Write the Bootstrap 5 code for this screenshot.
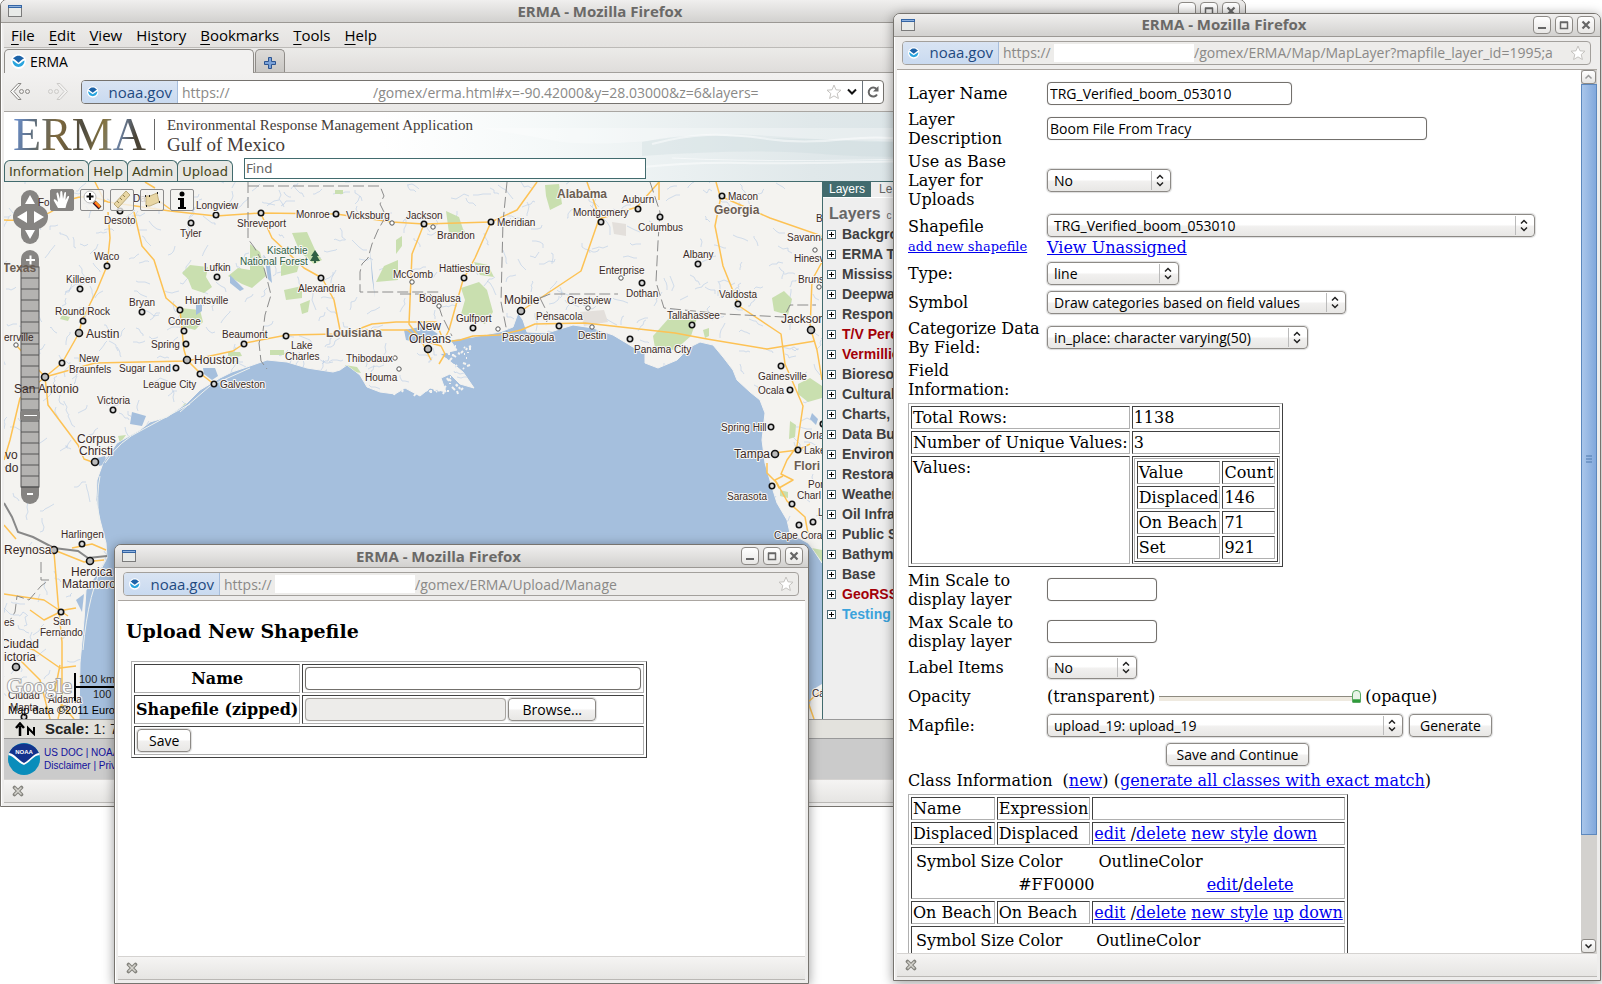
<!DOCTYPE html>
<html lang="en">
<head>
<meta charset="utf-8">
<meta name="viewport" content="width=device-width, initial-scale=1">
<title>ERMA - Mozilla Firefox</title>
<link href="https://cdn.jsdelivr.net/npm/bootstrap@5.3.0/dist/css/bootstrap.min.css" rel="stylesheet">
<style>
  :root { --ui: "Open Sans", "Noto Sans", sans-serif; --serif: "DejaVu Serif", serif; --sans: "Liberation Sans", Arial, sans-serif; --teal: #426b6e; }
  html, body { height: 100%; }
  body { background: #fff; color: #000; font-family: var(--ui); font-size: 14px; line-height: 19px; overflow: hidden; }
  .desktop { min-height: 100vh; overflow: hidden; }

  /* windows on the desktop */
  .win { position: absolute; background: #eeedec; border: 1px solid #77746f; border-radius: 7px 7px 0 0; box-shadow: inset 1px 1px 0 #fff, 0 2px 12px rgba(0,0,0,.4); overflow: hidden; }
  .win-map { left: 0; right: 356px; top: -1px; bottom: 177px; box-shadow: inset 1px 1px 0 #fff; }
  .win-upload { left: 114px; right: 793px; top: 544px; bottom: 0; }
  .win-layer { left: 893px; right: 1px; top: 13px; bottom: 3px; }
  .titlebar { height: 23px; background: linear-gradient(#f0efee, #d2d1cf); border-bottom: 1px solid #9b9894; padding: 0 5px 0 7px; }
  .titlebar .ttl { font-weight: 700; font-size: 15px; color: #6a6967; }
  .wbtn { width: 18px; height: 18px; padding: 0; border: 1px solid #8d8a86; border-radius: 4px; background: linear-gradient(#fff, #e8e7e5); display: flex; align-items: center; justify-content: center; }
  .inner { margin: 0 3px; min-height: 0; }

  .menubar { height: 25px; border-bottom: 1px solid #bcbab7; padding: 0 7px; gap: 14px; background: linear-gradient(#edecea, #e4e2e0); }
  .menubar a { color: #000; text-decoration: none; font-size: 15px; }
  .menubar u { text-underline-offset: 3px; }
  .tabbar { height: 25px; border-bottom: 1px solid #a3a09c; background: linear-gradient(#ecebe9, #dfdddb); }
  .tab-cur { width: 250px; height: 24px; margin-bottom: -1px; border: 1px solid #8f8c88; border-bottom: 0; border-radius: 5px 5px 0 0; background: #f2f1f0; padding: 0 6px; }
  .tab-new { width: 30px; height: 23px; border: 1px solid #8f8c88; border-bottom: 0; border-radius: 5px 5px 0 0; background: linear-gradient(#dddbd8, #c9c7c4); padding: 0; margin-left: 1px; }
  .navtool { height: 39px; background: linear-gradient(#f2f1f0, #e9e8e6); border-bottom: 1px solid #a9a6a2; padding-left: 5px; }
  .navtool .url { width: 803px; background: #fff; border-color: #75726e; }
  .url { height: 24px; border: 1px solid #a3a09c; border-radius: 4px; background: #edecea; overflow: hidden; font-size: 15px; white-space: nowrap; }
  .ident { width: 96px; height: 100%; background: linear-gradient(#d9e4f3, #c9daf0); border-right: 1px solid #a7bedd; color: #1f4a80; padding: 0 5px; gap: 10px; flex: none; }
  .url .addr { color: #8a8987; min-width: 0; overflow: hidden; padding-left: 4px; font-size: 14px; }
  .url .addr > :first-child { min-width: 51px; }
  .blank { width: 140px; height: 18px; background: #fff; flex: none; }
  .popnav { height: 33px; padding: 4px 6px 0 5px; border-bottom: 1px solid #aba6a1; flex: none; }
  .addonbar { height: 24px; border-top: 1px solid #d5d3d1; border-bottom: 1px solid #bab8b5; background: linear-gradient(#f5f4f3, #e6e5e3); padding: 0 8px; margin-bottom: 3px; flex: none; }
  .addonbar button, .plain { border: 0; background: none; padding: 0; line-height: 0; }

  /* site header */
  .banner { height: 70px; border-bottom: 1px solid var(--teal); background: #fff; position: relative; }
  .banner-art { position: absolute; inset: 0 0 0 auto; width: 860px; height: 69px; }
  .brandrow { height: 45px; padding-left: 9px; }
  .logo { font: 46px/46px "Liberation Serif", serif; background: linear-gradient(100deg, #6a8cc4 4%, #5d6a74 18%, #7d683c 34%, #4d4a40 52%, #85733f 66%, #6d84a6 78%, #4a4335 90%); -webkit-background-clip: text; background-clip: text; color: transparent; }
  .tagline { font-family: "Liberation Serif", serif; color: #453c38; border-left: 1px solid #666; padding-left: 12px; height: 31px; }
  .tagline div:first-child { font-size: 15px; line-height: 12px; }
  .tagline div:last-child { font-size: 19px; line-height: 28px; }
  .stab { height: 21px; border: 1px solid var(--teal); border-bottom: 0; border-radius: 6px 6px 0 0; background: #e8e8e4; color: #45461b; font: 13px/22px "DejaVu Sans", sans-serif; text-decoration: none; padding: 0 4px; margin-right: -1px; }
  .find { width: 402px; height: 21px; padding: 0 1px; border: 1px solid var(--teal); border-radius: 0; font: 13px/18px "DejaVu Sans", sans-serif; margin-left: 12px; margin-bottom: 2px; }
  .find::placeholder { color: #666; opacity: 1; }

  .mapbox { position: relative; background: #a5bfdd; min-width: 0; overflow: hidden; }
  .mapbox > svg { display: block; width: 100%; height: 100%; position: absolute; inset: 0; }
  .maptools { position: absolute; left: 46px; top: 7px; gap: 6px; }
  .maptools button { width: 24px; height: 22px; padding: 0; border: 1px solid #8b8b8b; border-radius: 2px; background: rgba(244,243,240,.8); line-height: 0; }
  .maptools button.on { background: #868482; border-color: #868482; }
  .side { width: 420px; flex: none; border-left: 1px solid var(--teal); background: #eee; font-family: var(--sans); overflow: hidden; }
  .side .tabs a { font-size: 12px; line-height: 15px; padding: 0 6px; text-decoration: none; color: #666; }
  .side .tabs a.on { background: var(--teal); color: #fff; }
  .side .tabs a:last-child { padding-left: 8px; }
  .side .tabs { border-bottom: 1px solid #fff; }
  .side h2 { font: bold 16px/16px var(--sans); color: #666; margin: 8px 0 0 6px; }
  .side h2 small { font-size: 10px; font-weight: 400; margin-left: 6px; }
  .tree { list-style: none; margin: 0; padding: 0 0 0 4px; }
  .tree li { height: 20px; font-weight: 700; font-size: 14px; line-height: 20px; color: #3f3f3f; gap: 6px; white-space: nowrap; }
  .tree button { width: 9px; height: 9px; padding: 0; border: 1px solid #4a6872; background: #fff; line-height: 0; flex: none; }
  .scalebar { height: 20px; border-top: 1px solid #999; border-bottom: 1px solid #999; background: #e3e2dd; font: 15px/18px var(--sans); padding-left: 11px; color: #222; }
  .foot { height: 40px; background: #cbcbcb; font: 10px/13px var(--sans); padding: 0 4px; color: #11119c; }
  .foot a { color: #11119c; text-decoration: none; }

  /* form documents */
  .doc { background: #fff; font: 16px/19px var(--serif); color: #000; overflow: hidden; min-width: 0; }
  .doc a { color: #00e; text-decoration: underline; }
  .doc .form-control, .doc .form-select, .doc .btn { font: 14px/19px var(--ui); height: 23px; color: #000; border-radius: 4px; margin: 1px 0; }
  .doc .form-control { border: 1px solid #73706c; padding: 0 2px; box-shadow: 0 0 1px #bbb; display: inline-block; }
  .doc .form-select { border: 1px solid #8d8a86; padding: 0 24px 0 5px; box-shadow: 0 0 1px 1px #ddd; width: auto; text-indent: 1px;
    background: url("data:image/svg+xml,%3Csvg xmlns='http://www.w3.org/2000/svg' width='20' height='19'%3E%3Cpath d='M1.5 0V19' stroke='%23bbb'/%3E%3Cpath d='M7 7.500l3-3 3 3M7 11.500l3 3 3-3' fill='none' stroke='%23222' stroke-width='1.500'/%3E%3C/svg%3E") no-repeat right 0 center / 20px 19px, linear-gradient(#fff 45%, #f1f0ef 55%, #e8e7e5); }
  .doc .btn { border: 1px solid #8d8a86; background: linear-gradient(#fff 45%, #f1f0ef 55%, #e8e7e5); padding: 0 10px; box-shadow: 0 0 1px 1px #ddd; white-space: nowrap; }
  .layerform { padding: 11px 14px 0 11px; }
  .layerform > * { flex-shrink: 0; }
  .frow { display: flex; align-items: center; gap: 2px; min-height: 25px; width: 100%; }
  .frow > .lab { width: 137px; flex: none; }
  .lab small { font-size: 13px; }
  .oldtable { border: 1px solid; border-color: #b0b0b0 #404040 #404040 #b0b0b0; border-collapse: separate; border-spacing: 2px; }
  .oldtable > tbody > tr > td, .oldtable > tbody > tr > th { border: 1px solid; border-color: #404040 #b0b0b0 #b0b0b0 #404040; padding: 1px; }
  .bare { border-collapse: separate; border-spacing: 2px; }
  .bare td { padding: 1px; height: 21px; }
  input[type=range].opac { -webkit-appearance: none; appearance: none; width: 202px; height: 16px; background: linear-gradient(#8d8a80, #8d8a80) 0 8px / 100% 1px no-repeat, linear-gradient(#efeae0, #efeae0) 0 9px / 100% 4px no-repeat; margin: 0 2px; }
  input[type=range].opac::-webkit-slider-thumb { -webkit-appearance: none; width: 9px; height: 13px; background: linear-gradient(#e8f4e8 70%, #2f9b3a 80%); border: 1px solid #5aa863; border-radius: 4px 4px 1px 1px; }
  .sbar { width: 16px; flex: none; background: #d3d1ce; }
  .sbar button { width: 15px; height: 14px; padding: 0; border: 1px solid #8d8a86; border-radius: 3px; background: linear-gradient(#fff, #e6e5e3); line-height: 0; }
  .sbar .thumb { flex: 0 0 85%; border: 1px solid #5d88bd; background: linear-gradient(90deg, #a9c6ea, #82a8dc); display: flex; align-items: center; justify-content: center; }
  h3.up { font: bold 19px/22px var(--serif); margin: 19px 0 19px; }
  .uptable { margin-left: 5px; }
  .uptable .form-control { margin: 1px; display: block; }
  .uptable .btn { margin: 1px; padding: 0 11px; }
  .uptable .btn.browse { padding: 0 13px; }
</style>
</head>
<body>
<svg width="0" height="0" class="position-absolute" aria-hidden="true">
  <symbol id="i-win" viewBox="0 0 14 12"><rect x=".5" y=".5" width="13" height="11" fill="#e8eae8" stroke="#7b7b7b"/><path d="M0 0h14v3H0z" fill="#3465a4"/><path d="M1 1h12v1H1z" fill="#8fb2de"/></symbol>
  <symbol id="i-min" viewBox="0 0 10 10"><path d="M1 8h8" stroke="#666" stroke-width="2"/></symbol>
  <symbol id="i-max" viewBox="0 0 10 10"><path d="M1.500 2.500h7v6h-7zM1 2h8" stroke="#666" stroke-width="1.500" fill="none"/></symbol>
  <symbol id="i-x" viewBox="0 0 10 10"><path d="M1.500 1.500l7 7M8.500 1.500l-7 7" stroke="#666" stroke-width="2.200"/></symbol>
  <symbol id="i-noaa" viewBox="0 0 16 16"><circle cx="8" cy="8" r="8" fill="#fff"/><path d="M3.800 3.500C5 1.200 11 1.200 12.200 3.500L14 4.600c-1.800.6-3.500 3-6 4.600C5.500 7.600 3.800 5.200 2 4.600z" fill="#1d63a8"/><path d="M1.600 7c1.600.2 3.400 2.800 6.400 4 3-1.200 4.800-3.800 6.400-4C14.400 16 1.600 16 1.600 7z" fill="#2aa5de"/></symbol>
  <symbol id="i-star" viewBox="0 0 16 16"><path d="M8 1l2 4.800 5 .4-3.800 3.300 1.200 5L8 11.900 3.600 14.500l1.200-5L1 6.200l5-.4z" fill="#fff" stroke="#c4c2bf" stroke-linejoin="round"/></symbol>
  <symbol id="i-xx" viewBox="0 0 12 12"><path d="M2.500 2.500l7 7M9.500 2.500l-7 7" stroke="#83827c" stroke-width="3.600" stroke-linecap="round"/><path d="M2.500 2.500l7 7M9.500 2.500l-7 7" stroke="#d5d4ce" stroke-width="1.500"/></symbol>
  <symbol id="i-plus" viewBox="0 0 7 7"><path d="M1 3.500h5M3.500 1v5" stroke="#000"/></symbol>
</svg>

<main class="desktop position-relative">

<!-- map window -->
<section class="win win-map d-flex flex-column">
  <div class="titlebar d-flex align-items-center gap-1">
    <svg width="14" height="12"><use href="#i-win"/></svg><div class="ttl flex-fill text-center">ERMA - Mozilla Firefox</div>
    <button class="wbtn" aria-label="Minimize"><svg width="10" height="10"><use href="#i-min"/></svg></button>
    <button class="wbtn" aria-label="Maximize"><svg width="10" height="10"><use href="#i-max"/></svg></button>
    <button class="wbtn" aria-label="Close"><svg width="10" height="10"><use href="#i-x"/></svg></button>
  </div>
  <div class="inner d-flex flex-column flex-fill">
    <nav class="menubar d-flex align-items-center">
      <a href="#"><u>F</u>ile</a><a href="#"><u>E</u>dit</a><a href="#"><u>V</u>iew</a><a href="#">Hi<u>s</u>tory</a><a href="#"><u>B</u>ookmarks</a><a href="#"><u>T</u>ools</a><a href="#"><u>H</u>elp</a>
    </nav>
    <div class="tabbar d-flex align-items-end">
      <div class="tab-cur d-flex align-items-center gap-1"><svg width="15" height="15"><use href="#i-noaa"/></svg>ERMA</div>
      <button class="tab-new" aria-label="New tab"><svg width="12" height="12" viewBox="0 0 12 12"><path d="M4.500 .5h3v4h4v3h-4v4h-3v-4h-4v-3h4z" fill="#7ba2d8" stroke="#2d5590"/></svg></button>
    </div>
    <div class="navtool d-flex align-items-center">
      <svg width="22" height="20" viewBox="0 0 22 20" fill="none" stroke="#8a8885"><path d="M9 1.500L1.500 9.500 9 17.500h3L5 9.500l7-8z" fill="#f7f7f6"/><circle cx="12.500" cy="9.500" r="2"/><circle cx="18.500" cy="9.500" r="2"/></svg>
      <svg class="ms-3 me-2 opacity-50" width="22" height="20" viewBox="0 0 22 20" fill="none" stroke="#aaa8a5"><path d="M13 1.500l7.500 8-7.500 8h-3l7-8-7-8z" fill="#f7f7f6"/><circle cx="3.500" cy="9.500" r="2"/><circle cx="9.500" cy="9.500" r="2"/></svg>
      <div class="url ms-1 d-flex align-items-center">
        <div class="ident d-flex align-items-center"><svg width="16" height="16"><use href="#i-noaa"/></svg>noaa.gov</div>
        <div class="addr flex-fill d-flex align-items-center"><span>https://</span><span class="blank"></span><span>/gomex/erma.html#x=-90.42000&amp;y=28.03000&amp;z=6&amp;layers=</span></div>
        <svg width="16" height="16"><use href="#i-star"/></svg>
        <svg class="mx-1" width="12" height="8" viewBox="0 0 12 8"><path d="M2 1.500l4 4 4-4" fill="none" stroke="#111" stroke-width="2"/></svg>
        <button class="plain border-start border-secondary h-100 px-1" aria-label="Reload"><svg width="12" height="12" viewBox="0 0 12 12"><path d="M9.500 3A4.500 4.500 0 1 0 10 8.500" fill="none" stroke="#666" stroke-width="2"/><path d="M11.500 0v5.500H6z" fill="#666"/></svg></button>
      </div>
    </div>
    <header class="banner d-flex flex-column justify-content-between">
      <svg class="banner-art" viewBox="0 0 860 69" preserveAspectRatio="none" aria-hidden="true">
        <defs><linearGradient id="sky"><stop offset="0" stop-color="#fff"/><stop offset=".2" stop-color="#f4f8f8"/><stop offset=".5" stop-color="#e0e8ea"/><stop offset="1" stop-color="#cddbe0"/></linearGradient></defs>
        <path d="M0 0h860v69H0z" fill="url(#sky)"/>
        <path d="M100 16h760v14C700 40 560 30 500 30S360 18 310 24 220 34 180 30z" fill="#fff" opacity=".3"/>
        <path d="M260 30q40-8 80-6t120 4 90 4 110 0v10q-150 6-220 0t-180 2z" fill="#c6d6db" opacity=".3"/>
        <g fill="none" stroke="#fff" stroke-width="2" opacity=".5"><path d="M270 32q30-8 55-9t60 4 80 0 95 6 90 0"/><path d="M250 56q60-6 110-5t170-2 120 4"/><path d="M290 46q120 6 330-2" stroke-width="1"/></g>
      </svg>
      <div class="brandrow d-flex align-items-center position-relative"><div class="logo">ERMA</div><div class="tagline ms-2"><div>Environmental Response Management Application</div><div>Gulf of Mexico</div></div></div>
      <div class="d-flex align-items-end position-relative"><a class="stab" href="#">Information</a><a class="stab" href="#">Help</a><a class="stab" href="#">Admin</a><a class="stab" href="#">Upload</a><input class="find" type="text" placeholder="Find" aria-label="Find"></div>
    </header>
    <div class="d-flex flex-fill">
      <div class="mapbox flex-fill">
        <svg id="map" viewBox="4 182 818 537" preserveAspectRatio="xMinYMin slice" role="img" aria-label="Map of the Gulf of Mexico"></svg>
        <div class="maptools d-flex">
          <button class="on" aria-label="Pan"><svg width="20" height="20" viewBox="0 0 20 20"><path d="M6 18L2 11c-1-2 1-2 2-1l2 2-1.500-8c0-2 1.500-2 2 0L8 9l.3-7c.3-1.500 1.700-1.500 2 0L11 9l1.300-6c.5-1.500 2-1 1.700.5L13.500 10l2-3.500c1-1 2-.2 1.500 1L14.500 14l-1 4z" fill="#fff"/></svg></button>
          <button aria-label="Zoom in"><svg width="20" height="20" viewBox="0 0 20 20"><path d="M12 12l6 6" stroke="#222" stroke-width="4"/><path d="M13 12l5 5" stroke="#ff8a1c" stroke-width="2.500"/><path d="M12 13l5 5" stroke="#c22" stroke-width="1"/><circle cx="8" cy="7" r="6" fill="#fff" stroke="#bbb"/><path d="M4.500 6.500h7M8 3v7" stroke="#111" stroke-width="2"/></svg></button>
          <button aria-label="Measure distance"><svg width="20" height="20" viewBox="0 0 20 20"><path d="M2 14L14 1l4 4L6 18z" fill="#e8d6a4" stroke="#b8a87a"/><path d="M5 11l2 2M8 8l2 2M11 5l2 2" stroke="#8d7d50"/></svg></button>
          <button aria-label="Measure area"><svg width="20" height="20" viewBox="0 0 20 20"><path d="M4 6l4 0 7-3 2 9-9 4-4 0z" fill="#e8d6a4" stroke="#c2b080"/><path d="M3 6h1M7 6h1M15 3h1M17 12h1M4 16h1" stroke="#222" stroke-width="2"/></svg></button>
          <button aria-label="Identify"><svg width="12" height="20" viewBox="0 0 12 20"><circle cx="6" cy="4" r="2.500"/><path d="M2 8h6v9h2v2H2v-2h2v-7H2z"/></svg></button>
        </div>
      </div>
      <aside class="side">
        <div class="tabs d-flex"><a class="on" href="#">Layers</a><a href="#">Le</a></div>
        <h2>Layers<small>c</small></h2>
        <ul class="tree" id="tree"></ul>
      </aside>
    </div>
    <div class="scalebar d-flex align-items-center"><svg class="me-2" width="22" height="14" viewBox="0 0 22 14"><path d="M5 14V4M1 6L5 1.500 9 6" stroke="#000" stroke-width="2.500" fill="none"/><path d="M13 13V6l6 6V5" stroke="#000" stroke-width="2" fill="none"/></svg><b class="me-1">Scale:</b> 1: 7</div>
    <footer class="foot d-flex align-items-center gap-1">
      <svg width="32" height="32" viewBox="0 0 32 32"><circle cx="16" cy="16" r="16" fill="#0a8dbb"/><path d="M1 11C5-3 27-3 31 11c-6 1-9 6-15 11C10 16 7 12 1 11z" fill="#14338c"/><path d="M1 10c6 1 9 7 15 10 6-3 9-9 15-10l.5 2c-7 1-9 7-15.500 10C10 20 7 14 .5 12z" fill="#fff"/><text x="16" y="11" font-size="6" font-weight="700" fill="#fff" text-anchor="middle" font-family="Liberation Sans">NOAA</text></svg>
      <div><a href="#">US DOC</a> | <a href="#">NOAA</a><br><a href="#">Disclaimer</a> | <a href="#">Priv</a></div>
    </footer>
    <div class="addonbar d-flex align-items-center"><button aria-label="Close add-on bar"><svg width="12" height="12"><use href="#i-xx"/></svg></button></div>
  </div>
</section>

<!-- upload window -->
<section class="win win-upload d-flex flex-column">
  <div class="titlebar d-flex align-items-center gap-1">
    <svg width="14" height="12"><use href="#i-win"/></svg><div class="ttl flex-fill text-center">ERMA - Mozilla Firefox</div>
    <button class="wbtn" aria-label="Minimize"><svg width="10" height="10"><use href="#i-min"/></svg></button>
    <button class="wbtn" aria-label="Maximize"><svg width="10" height="10"><use href="#i-max"/></svg></button>
    <button class="wbtn" aria-label="Close"><svg width="10" height="10"><use href="#i-x"/></svg></button>
  </div>
  <div class="inner d-flex flex-column flex-fill">
    <div class="popnav"><div class="url d-flex align-items-center">
      <div class="ident d-flex align-items-center"><svg width="16" height="16"><use href="#i-noaa"/></svg>noaa.gov</div>
      <div class="addr flex-fill d-flex align-items-center"><span>https://</span><span class="blank"></span><span>/gomex/ERMA/Upload/Manage</span></div>
      <svg class="me-1" width="16" height="16"><use href="#i-star"/></svg>
    </div></div>
    <div class="doc flex-fill px-2">
      <h3 class="up">Upload New Shapefile</h3>
      <table class="oldtable uptable"><tbody>
        <tr><th class="text-center"><label for="shpname">Name</label></th><td><input id="shpname" class="form-control" style="width:336px" type="text"></td></tr>
        <tr><th><label for="shpfile">Shapefile (zipped)</label></th><td><div class="d-flex align-items-center"><input id="shpfile" class="form-control" style="width:201px;background:#edecea;border-color:#a8a5a1" type="text" readonly><button class="btn browse" type="button">Browse...</button></div></td></tr>
        <tr><td colspan="2"><button class="btn d-block" type="submit">Save</button></td></tr>
      </tbody></table>
    </div>
    <div class="addonbar d-flex align-items-center"><button aria-label="Close add-on bar"><svg width="12" height="12"><use href="#i-xx"/></svg></button></div>
  </div>
</section>

<!-- layer window -->
<section class="win win-layer d-flex flex-column">
  <div class="titlebar d-flex align-items-center gap-1">
    <svg width="14" height="12"><use href="#i-win"/></svg><div class="ttl flex-fill text-center">ERMA - Mozilla Firefox</div>
    <button class="wbtn" aria-label="Minimize"><svg width="10" height="10"><use href="#i-min"/></svg></button>
    <button class="wbtn" aria-label="Maximize"><svg width="10" height="10"><use href="#i-max"/></svg></button>
    <button class="wbtn" aria-label="Close"><svg width="10" height="10"><use href="#i-x"/></svg></button>
  </div>
  <div class="inner d-flex flex-column flex-fill">
    <div class="popnav"><div class="url d-flex align-items-center">
      <div class="ident d-flex align-items-center"><svg width="16" height="16"><use href="#i-noaa"/></svg>noaa.gov</div>
      <div class="addr flex-fill d-flex align-items-center"><span>https://</span><span class="blank"></span><span>/gomex/ERMA/Map/MapLayer?mapfile_layer_id=1995;a</span></div>
      <svg class="mx-1 flex-shrink-0" width="16" height="16"><use href="#i-star"/></svg>
    </div></div>
    <div class="d-flex flex-fill" style="min-height:0">
      <form class="doc layerform flex-fill d-flex flex-column align-items-start gap-1">
        <div class="frow"><label class="lab" for="f1">Layer Name</label><input id="f1" class="form-control" style="width:245px" value="TRG_Verified_boom_053010"></div>
        <div class="frow"><label class="lab" for="f2">Layer<br>Description</label><input id="f2" class="form-control" style="width:380px" value="Boom File From Tracy"></div>
        <div class="frow"><label class="lab" for="f3">Use as Base<br>Layer for<br>Uploads</label><select id="f3" class="form-select" style="width:124px"><option>No</option></select></div>
        <div class="frow"><div class="lab"><label class="d-block mt-1" for="f4">Shapefile</label><a href="#"><small>add new shapefile</small></a></div><div><select id="f4" class="form-select" style="width:488px"><option>TRG_Verified_boom_053010</option></select><a href="#">View Unassigned</a></div></div>
        <div class="frow"><label class="lab" for="f5">Type:</label><select id="f5" class="form-select" style="width:132px"><option>line</option></select></div>
        <div class="frow"><label class="lab" for="f6">Symbol</label><select id="f6" class="form-select" style="width:299px"><option>Draw categories based on field values</option></select></div>
        <div class="frow"><label class="lab" for="f7">Categorize Data<br>By Field:</label><select id="f7" class="form-select" style="width:261px"><option>in_place: character varying(50)</option></select></div>
        <div>Field<br>Information:</div>
        <table class="oldtable"><tbody>
          <tr><td>Total Rows:</td><td>1138</td></tr>
          <tr><td>Number of Unique Values:</td><td>3</td></tr>
          <tr><td class="align-top">Values:</td><td><table class="oldtable"><tbody>
            <tr><td>Value</td><td>Count</td></tr><tr><td>Displaced</td><td>146</td></tr><tr><td>On Beach</td><td>71</td></tr><tr><td>Set</td><td>921</td></tr>
          </tbody></table></td></tr>
        </tbody></table>
        <div class="frow"><label class="lab" for="f8">Min Scale to<br>display layer</label><input id="f8" class="form-control" style="width:110px"></div>
        <div class="frow"><label class="lab" for="f9">Max Scale to<br>display layer</label><input id="f9" class="form-control" style="width:110px"></div>
        <div class="frow"><label class="lab" for="f10">Label Items</label><select id="f10" class="form-select" style="width:90px"><option>No</option></select></div>
        <div class="frow"><label class="lab" for="f11">Opacity</label><span>(transparent)</span><input id="f11" class="opac" type="range" value="100"><span>(opaque)</span></div>
        <div class="frow"><label class="lab" for="f12">Mapfile:</label><select id="f12" class="form-select" style="width:356px"><option>upload_19: upload_19</option></select><button class="btn ms-1" type="button">Generate</button></div>
        <div class="w-100 d-flex justify-content-center"><button class="btn" type="submit">Save and Continue</button></div>
        <div>Class Information &nbsp;(<a href="#">new</a>) (<a href="#">generate all classes with exact match</a>)</div>
        <table class="oldtable"><tbody>
          <tr><td>Name</td><td>Expression</td><td></td></tr>
          <tr><td>Displaced</td><td>Displaced</td><td><a href="#">edit</a> /<a href="#">delete</a> <a href="#">new style</a> <a href="#">down</a></td></tr>
          <tr><td colspan="3"><table class="bare"><tbody><tr><td>Symbol</td><td>Size</td><td>Color</td><td>OutlineColor</td><td></td></tr><tr><td></td><td></td><td>#FF0000</td><td></td><td><a href="#">edit</a>/<a href="#">delete</a></td></tr></tbody></table></td></tr>
          <tr><td>On Beach</td><td>On Beach</td><td><a href="#">edit</a> /<a href="#">delete</a> <a href="#">new style</a> <a href="#">up</a> <a href="#">down</a></td></tr>
          <tr><td colspan="3"><table class="bare"><tbody><tr><td>Symbol</td><td>Size</td><td style="width:76px">Color</td><td>OutlineColor</td></tr></tbody></table></td></tr>
        </tbody></table>
      </form>
      <div class="sbar d-flex flex-column">
        <button aria-label="Scroll up"><svg width="9" height="6" viewBox="0 0 9 6"><path d="M1.500 4.500l3-3 3 3" fill="none" stroke="#999" stroke-width="1.500"/></svg></button>
        <div class="thumb flex-shrink-0"><svg width="6" height="8"><path d="M0 1h6M0 4h6M0 7h6" stroke="#4d78ad"/></svg></div>
        <button class="mt-auto" aria-label="Scroll down"><svg width="9" height="6" viewBox="0 0 9 6"><path d="M1.500 1.500l3 3 3-3" fill="none" stroke="#222" stroke-width="1.500"/></svg></button>
      </div>
    </div>
    <div class="addonbar d-flex align-items-center"><button aria-label="Close add-on bar"><svg width="12" height="12"><use href="#i-xx"/></svg></button></div>
  </div>
</section>
</main>

<script src="https://cdn.jsdelivr.net/npm/bootstrap@5.3.0/dist/js/bootstrap.bundle.min.js"></script>
<script>
// layer tree
const layers = ['Backgro','ERMA T','Mississ','Deepwa','Respon','T/V Pere','Vermillio','Bioreso','Cultural','Charts,','Data Bu','Environ','Restora','Weather','Oil Infra','Public S','Bathym','Base','GeoRSS','Testing'];
const tint = {'T/V Pere':'#a30008','Vermillio':'#a30008','GeoRSS':'#a30008','Testing':'#3ba3dc'};
document.getElementById('tree').innerHTML = layers.map(t =>
  `<li class="d-flex align-items-center"${tint[t] ? ` style="color:${tint[t]}"` : ''}><button class="d-flex align-items-center justify-content-center" aria-label="Expand ${t}"><svg width="7" height="7"><use href="#i-plus"/></svg></button>${t}</li>`).join('');

// map
const land = 'M4 182H822V563L812 548 808 543 790 533 787 520 777 503 772 487 765 463 762 440 765 413 760 400 750 392 737 380 733 370 723 357 713 345 700 342 690 347 677 360 658 368 645 363 645 353 633 347 613 335 593 328 573 325 547 333 527 332 523 320 518 313 513 327 500 332 473 337 450 340 457 350 440 354 452 363 463 372 474 388 460 384 450 374 441 378 446 392 430 388 420 396 405 388 395 394 380 392 367 387 360 375 347 365 340 370 333 372 320 370 307 368 287 362 267 360 247 367 232 372 220 378 200 390 187 403 167 417 150 422 140 430 117 443 103 463 97 480 96 500 100 520 106 543 107 558 96 575 86 590 84 620 80 663 79 719H4z';
let seed = 7; const rnd = () => (seed = (seed * 16807) % 2147483647) / 2147483647;
let rivers = '', hue = '';
for (let i = 0; i < 900; i++) {
  let x = 4 + rnd() * 818, y = 182 + rnd() * 537, d = `M${x.toFixed(0)} ${y.toFixed(0)}`;
  const a = rnd() * 6.300;
  for (let k = 0; k < 4; k++) d += `l${(Math.cos(a) * 3 + rnd() * 5 - 2.500).toFixed(0)} ${(Math.sin(a) * 3 + rnd() * 5 - 2.500).toFixed(0)}`;
  rivers += d;
}
for (let i = 0; i < 260; i++) { // marsh islands of the delta
  const x = 385 + rnd() * 85, y = 345 + rnd() * 48;
  hue += `M${x.toFixed(0)} ${y.toFixed(0)}l${(rnd()*6-3).toFixed(0)} ${(rnd()*6-3).toFixed(0)}`;
}
const parks = ['M292 233l15-1 9 20 6 8-8 4-14-12z','M190 265l18 2-2 10 6 10-8 6-12-4-4-10-6-6z','M250 244l10 8 6 24-14 12-10-4-14-8 10-8 12 2z','M180 308l20 2 3 12-8 8-14-4z','M281 262l20-4-4 14-16 4z','M284 290l18-4v12l-16 2z','M384 266l14-6v20l-22 2z','M396 240l6-4v10l-6 8zM300 304l10-4-2 12-6 2z','M446 211l13 6 4 12 6 8-20-4z','M461 288l18-6 8 8 6 22-8 12-24-10 4-14zM474 262l14 3 6 12-14-2z','M545 185l14-1 3 20-12 6-4-14z','M653 336l16-18 14-6 14 6-6 18-16 14-20-2z','M772 298l12-7 8 8-4 16-14-4z','M798 384l12-6 12 8v12l-14 4-10-8z','M790 421l6 4-1 12-6 2zM780 490l8 2v6l-8-2z','M703 330l6-2v8l-4 2z','M812 548l10 2v12z','M62 315l8 2-2 4-8-2z','M228 352h12l2 4-14 2z','M345 365l12 2 4 6-12-2z','M184 404l3-1-6 8-3 1zM118 436l8-1-6 8z','M270 350h14v5h-14zM335 190h8v4h-8z'];
const lakes = ['M230 275l6 6 8 8-4 2-10-8z','M196 305l6-2v8l-6 4z','M203 368l12 0 3 8-6 4-8-6z','M132 412l14 4-4 10-12-2z','M404 330l22-4 12 8-14 10-18-4z','M97 458l8-2 2 8-8 2z','M76 600l8-6-2 18z','M264 255l6 10 2 18-4-4z','M812 413l6 6-2 6-6-6zM370 248l2 30 3 20'];
const roads = ['M4 220Q40 222 60 206T108 202L170 211 216 216 261 213 336 214 392 222 424 224 491 222','M155 198L170 209','M108 212L110 238 107 266 97 290 82 320 79 333 62 363 45 377 20 398 10 440 4 460','M134 212l8 34 12 14 12 38 14 12 4 40 3 10 14 14 14 11','M45 377l50-14 92-2 46-10 12-8 42-8 50-1 30-4 40 0 14 10 20 6 4 8-6 10M45 377l3 28 30 40 6 14 11 4M16 345l29 32','M262 216l10 22 32 30 18 10 12 22 6 30M340 336l32-12 24 -2 40 0 8 20 16-2 13-4 26-1 22-5 14-6 50-1 90 10 32 6 60 10 48-8','M424 224l-12 30-3 70 12 16 10 20M491 222l-16 36-12 22-14 50-6 12','M537 182l-20 28-26 12','M521 311l60-40 18-52 38-12 22-25M601 222l-14-40','M659 200v-18M716 182l4 14 50 22 52 18M721 196l-6 30 8 40 16 40 42 28 4 30 18 42-6 40-10 14-6 14 12 6-14 8-4-8 8-4','M774 453l24-3 12-6M767 463l0 10 10 10 10 18 18 16 4 22M810 330l2-50 10-18M811 330l6 20 5 30','M4 552l20-4 30 2 30 12 20-2M54 552l4 50 4 40 0 60-4 17M4 594l40 6 24 16M30 610l14 10 20-10 12-2M4 640l30 10 26 18 16-2M20 660l20 20 10 39M60 665l-6 30 20 24M72 548l20-4 14 6','M95 182l10 20M145 182l10 6','M4 525l12 14M822 690l-14 12 6 17'];
const borders = ['M248 182v57l6 8 8 14 5 18 4 16-6 20-2 16-4 12 2 18 6 8','M248 186H380l4 10-4 8 6 12-8 14-6 14-4 14-6 6-2 8v20h80','M400 294h30l8 10 4 12 10 20','M507 182l-4 40-2 80 6 30','M650 182l10 30-2 30-2 40 8 26 60 6 60 3 6-12 26 0M540 298l10-4h68M540 298l8 16-2 12','M41 562v18h8l-8 6-12 14-12-4-2 16-6 10'];
const dark = 'M4 503L12 517 18 532 33 537 54 548 78 551 88 558 107 556';
// label, x, y, size, [marker x, marker y, kind]
const L = [['Desoto',104,224,9,120,211,1],['Tyler',180,237,9,191,223,1],['Longview',196,209,9,216,215,1],['Shreveport',237,227,9,261,213,1],['Monroe',296,218,9,336,214,1],['Vicksburg',346,219,9,392,223,0],['Jackson',406,219,9,424,224,1],['Brandon',437,239,9,433,227,0],['Meridian',497,226,9,491,222,1],
['Montgomery',573,216,9,601,222,1],['Auburn',622,203,9,638,209,1],['Columbus',638,231,9,660,217,1],['Macon',728,200,9,722,196,1],['Savanna',787,241,9,815,250,0],['Hinesv',794,262,9],['B',816,222,9],['Waco',94,260,9,107,266,1],['Killeen',66,283,9,80,289,1],['Bryan',129,306,9,142,312,1],['Round Rock',55,315,9,83,321,1],['Huntsville',185,304,9,180,310,1],['Conroe',168,325,9,184,331,1],['Spring',151,348,9,186,344,1],['Austin',86,338,11,79,333,2],['Lufkin',204,271,9,217,277,1],['Beaumont',222,338,9,244,344,1],['Lake',291,349,9,286,336,1],['Charles',285,360,9],['Houston',194,364,11,187,360,2],['Sugar Land',119,372,9,176,368,1],['League City',143,388,9,200,374,1],['Galveston',220,388,9,214,384,1],['New',79,362,9,62,363,1],['Braunfels',69,373,9],['San Antonio',14,393,11,45,377,2],['Victoria',97,404,9,113,410,1],['Corpus',77,443,11,95,462,2],['Christi',79,455,11],['errville',4,341,9,16,345,0],['Harlingen',61,538,9,82,544,1],['Reynosa',4,554,11,54,550,2],['Heroica',71,576,11,90,561,2],['Matamoro',62,588,11],['San',53,625,9,61,612,1],['Fernando',40,636,9],['es',4,626,9],['Ciudad',1,648,11],['ictoria',4,661,11,16,667,2],['Alexandria',298,292,9,321,278,1],['McComb',393,278,9,412,282,0],['Hattiesburg',439,272,9,464,278,1],['Bogalusa',419,302,9,439,306,0],['Gulfport',456,322,9,473,328,1],['Mobile',504,304,11,521,311,2],['New',417,330,11,428,349,2],['Orleans',409,343,11],['Pascagoula',502,341,9,498,329,0],['Pensacola',536,320,9,559,326,1],['Crestview',567,304,9,588,308,0],['Destin',578,339,9,592,327,0],['Enterprise',599,274,9,621,278,0],['Dothan',626,297,9,642,283,1],['Albany',683,258,9,698,264,1],['Valdosta',719,298,9,738,304,1],['Bruns',798,283,9,819,287,0],['Tallahassee',667,319,9,692,325,1],['Panama City',634,353,9,630,339,1],['Jackson',781,323,11,811,330,2],['Gainesville',758,380,9,781,366,1],['Ocala',758,394,9,790,390,1],['Spring Hill',721,431,9,771,427,1],['Tampa',734,458,11,775,454,2],['Lake',804,454,9,798,450,1],['Orla',804,439,10,823,424,1],['Por',808,488,9],['Charl',797,499,9,792,504,1],['Sarasota',727,500,9,772,486,1],['L',818,516,9,813,522,1],['Cape Cora',774,539,9,799,525,1],['Thibodaux',346,362,9,395,358,0],['Houma',365,381,9,399,369,0],['vo',5,459,11],['do',5,472,11],['Ciudad',8,699,9],['Manta',10,711,9,24,717,1],['Aldama',48,703,9,65,708,0],['Fo',38,206,9],['Da',133,202,9],['Ca',812,697,9]];
const big = [['Texas',3,272],['Louisiana',326,337],['Alabama',557,198],['Georgia',714,214],['Flori',794,470]];
const px = {9:10, 10:11, 11:12};
let s = `<defs><clipPath id="lc"><path d="${land}"/></clipPath></defs><path d="${land}" fill="#f4f3f0" stroke="#f4f3f0"/><path d="${hue}" stroke="#f4f3f0" stroke-width="2"/><path d="M812 690l10-6v35h-14z" fill="#f4f3f0"/>
<g clip-path="url(#lc)"><path d="${rivers}" fill="none" stroke="#b3c9e6" stroke-width="1" opacity=".55"/><g fill="#c9dfaf">${parks.map(p=>`<path d="${p}"/>`).join('')}</g><g fill="#a5bfdd">${lakes.map(p=>`<path d="${p}"/>`).join('')}</g><path d="M580 312l24-2 4 12-24 4zM612 222l14 2v12l-12-2z" fill="#e3dfdb"/></g>
<g fill="none" stroke="#fdc254" stroke-width="1.500" stroke-linejoin="round">${roads.map(p=>`<path d="${p}"/>`).join('')}</g>
<g fill="none" stroke="#8c8c8c" stroke-dasharray="11 4">${borders.map(p=>`<path d="${p}"/>`).join('')}</g><path d="${dark}" fill="none" stroke="#888" stroke-width="2"/>
<path d="M105 463Q120 440 142 430L190 404M99 520Q96 495 100 476M106 560Q88 590 83 650M180 412l30-26 40-18" fill="none" stroke="#eef1ee" stroke-width="1"/>`;
// pan cross and zoom slider, under the place names
s += `<g fill="#868482"><rect x="21" y="190" width="18" height="54" rx="9"/><rect x="13" y="205" width="35" height="24" rx="12"/><rect x="21" y="250" width="18" height="254" rx="9"/></g><g fill="#fff"><path d="M30 195l5 9H25zM30 239l5-9H25zM17 217l10-6v12zM44 217l-10-6v12z"/></g>
<rect x="21" y="267" width="18" height="220" fill="#b4b3b1" stroke="#555" stroke-width="1"/><path d="${Array.from({length:20},(_,i)=>`M21 ${278+i*11}h18`).join('')}" stroke="#555"/><rect x="20" y="411" width="20" height="9" rx="2" fill="#868482"/><path d="M24 415.500h13" stroke="#fff"/><path d="M26 260h9M30.500 255.500v9M27 494h6" stroke="#fff" stroke-width="2"/>`;
s += '<g>' + L.map(l => l[4] === undefined ? '' : `<circle cx="${l[4]}" cy="${l[5]}" r="${[2.200,2.700,3.500][l[6]]}" fill="${['#fff','#ddd','#bbb'][l[6]]}" stroke="${l[6]?'#111':'#555'}" stroke-width="${l[6]?1.600:1}"/>`).join('') + '</g>';
const label = (l) => `<text x="${l[1]}" y="${l[2]}" font-size="${px[l[3]]}"${l[1] < 39 && l[2] < 500 ? ' stroke="none"' : ''}>${l[0]}</text>`;
s += '<g font-family="Liberation Sans" fill="#3a2a26" stroke="#f8f7f5" stroke-width="2" paint-order="stroke" stroke-linejoin="round">' + L.map(label).join('');
s += big.map(b => `<text x="${b[1]}" y="${b[2]}" font-size="12" font-weight="700" fill="#6b5d52"${b[1] < 39 ? ' stroke="none"' : ''}>${b[0]}</text>`).join('');
s += '<g fill="#2f5f45" font-size="10"><text x="267" y="254">Kisatchie</text><text x="240" y="265">National Forest</text></g></g><path d="M315 250l4 6h-2l3 5h-4v2h-2v-2h-4l3-5h-2z" fill="#2f5f45"/>';
// attribution and scale line
s += `<text x="7" y="693" font-family="Liberation Serif" font-size="22" fill="#fff" stroke="#a5a5a5" stroke-width="2" paint-order="stroke">Google</text><path d="M75 673v28M75 687h60" stroke="#000" stroke-width="2"/><g font-family="Liberation Sans" font-size="11" fill="#222"><text x="79" y="683">100 km</text><text x="93" y="698">100</text><text x="8" y="714" fill="#000">Map data ©2011 Europ</text></g>`;
document.getElementById('map').innerHTML = s;
</script>
</body>
</html>
